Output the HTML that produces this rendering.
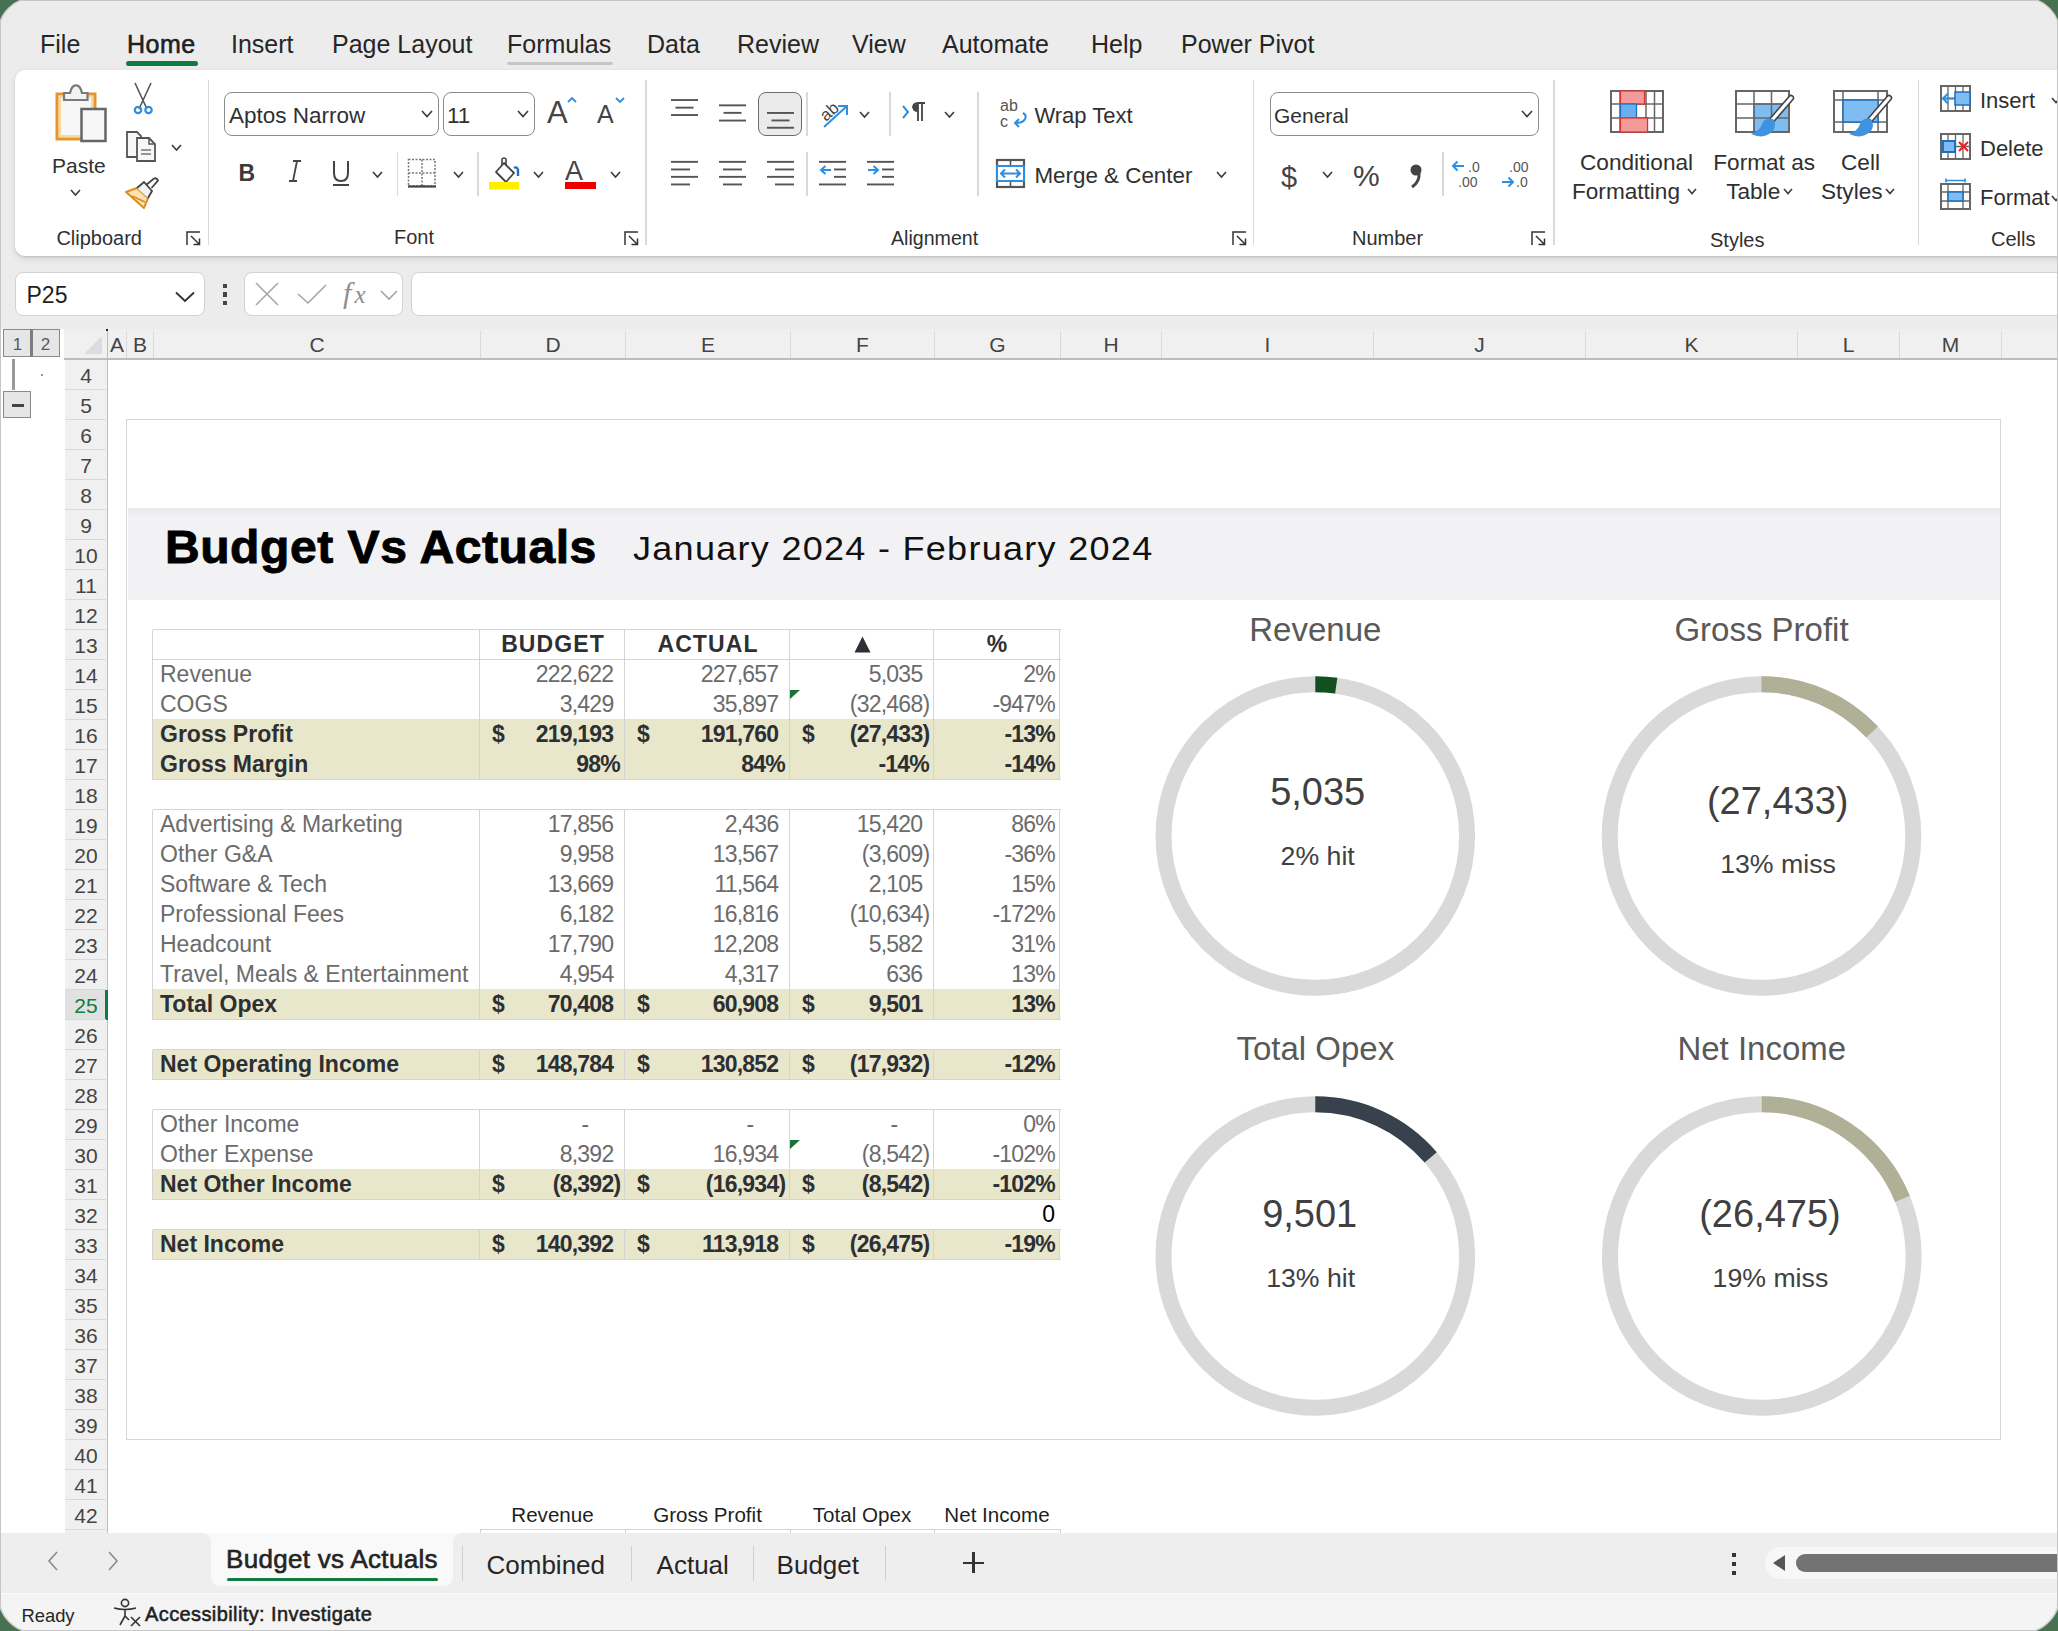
<!DOCTYPE html>
<html><head><meta charset="utf-8">
<style>
*{margin:0;padding:0;box-sizing:border-box}
html,body{width:2058px;height:1631px;overflow:hidden;background:#477150;font-family:"Liberation Sans",sans-serif}
.a{position:absolute;white-space:pre}
#win{position:absolute;left:0;top:0;width:2058px;height:1631px;background:#ececec;overflow:hidden}
#frame{position:absolute;left:0;top:0;width:2058px;height:1631px;border-radius:22px;border:1.5px solid #c4c4c4;pointer-events:none}
.menu{font-size:25px;color:#262626;line-height:30px}
.rib{position:absolute;left:15px;top:70px;width:2100px;height:186px;background:#fff;border-radius:10px;box-shadow:0 1px 2px rgba(0,0,0,.12),0 3px 7px rgba(0,0,0,.10)}
.glab{font-size:20px;color:#262626;line-height:24px}
.sep{position:absolute;width:1.5px;background:#d8d8d8}
.rtxt{font-size:22px;color:#262626;line-height:26px}
.box{position:absolute;background:#fff;border:1.5px solid #8c8c8c;border-radius:8px}
.fbox{position:absolute;background:#fff;border:1px solid #d2d2d2;border-radius:8px}
svg{position:absolute;overflow:visible}
.colh{position:absolute;top:329px;height:30px;font-size:21px;color:#444;text-align:center;line-height:31px}
.cb{position:absolute;top:332px;width:1px;height:26px;background:#d6d6d6}
.rowh{position:absolute;left:65px;width:42px;height:30px;font-size:21px;color:#444;text-align:center;line-height:31px}
.rb{position:absolute;left:66px;width:40px;height:1.5px;background:#d6d6d6}
.t{position:absolute;font-size:23px;color:#6b6b6b;white-space:pre;line-height:30px;height:30px}
.tb{font-weight:bold;color:#2b2b2b}
.r{text-align:right}
.sh{position:absolute;background:#e8e7cc}
.hl{position:absolute;height:1.5px;background:#d4d4d4}
.vl{position:absolute;width:1.5px;background:#d4d4d4}
.dt{position:absolute;font-size:34px;color:#595959;white-space:pre;line-height:40px}
.dv{position:absolute;font-size:37px;color:#404040;white-space:pre;line-height:44px}
.ds{position:absolute;font-size:27px;color:#404040;white-space:pre;line-height:32px}

</style></head><body>
<div id="win">
<div class="a" style="top:29.14px;font-size:25px;line-height:31px;color:#262626;left:40px;">File</div>
<div class="a" style="top:29.14px;font-size:25px;line-height:31px;color:#262626;left:231px;">Insert</div>
<div class="a" style="top:29.14px;font-size:25px;line-height:31px;color:#262626;left:332px;">Page Layout</div>
<div class="a" style="top:29.14px;font-size:25px;line-height:31px;color:#262626;left:507px;">Formulas</div>
<div class="a" style="top:29.14px;font-size:25px;line-height:31px;color:#262626;left:647px;">Data</div>
<div class="a" style="top:29.14px;font-size:25px;line-height:31px;color:#262626;left:737px;">Review</div>
<div class="a" style="top:29.14px;font-size:25px;line-height:31px;color:#262626;left:852px;">View</div>
<div class="a" style="top:29.14px;font-size:25px;line-height:31px;color:#262626;left:942px;">Automate</div>
<div class="a" style="top:29.14px;font-size:25px;line-height:31px;color:#262626;left:1091px;">Help</div>
<div class="a" style="top:29.14px;font-size:25px;line-height:31px;color:#262626;left:1181px;">Power Pivot</div>
<div class="a" style="top:29.14px;font-size:25px;line-height:31px;color:#1f1f1f;letter-spacing:0.5px;left:127px;-webkit-text-stroke:0.6px #1f1f1f;">Home</div>
<div class="a" style="left:126px;top:61px;width:72px;height:5px;background:#107c41;border-radius:3px"></div>
<div class="a" style="left:507px;top:62px;width:106px;height:3px;background:#c6c6c6;border-radius:2px"></div>
<div class="rib"></div>
<div class="a" style="left:207.8px;top:80px;width:1.5px;height:165px;background:#d9d9d9;"></div>
<div class="a" style="left:645px;top:80px;width:1.5px;height:165px;background:#d9d9d9;"></div>
<div class="a" style="left:1252.8px;top:80px;width:1.5px;height:165px;background:#d9d9d9;"></div>
<div class="a" style="left:1553px;top:80px;width:1.5px;height:165px;background:#d9d9d9;"></div>
<div class="a" style="left:1917.5px;top:80px;width:1.5px;height:165px;background:#d9d9d9;"></div>
<svg style="left:50px;top:84px" width="60" height="62" viewBox="0 0 60 62"><rect x="7" y="10" width="38" height="45" fill="#fdf3dc" stroke="#e59430" stroke-width="3"/><rect x="10" y="13" width="32" height="39" fill="#f7f7f7" stroke="#fbd89a" stroke-width="2"/><path d="M14 16 V9 H20 Q22 1 26 1.5 Q30 1 32 9 H37.5 V16 Z" fill="#f3f3f3" stroke="#7a7a7a" stroke-width="2.2"/><rect x="31.5" y="25" width="24" height="32" fill="#f7f7f7" stroke="#666" stroke-width="2.5"/></svg>
<div class="a" style="top:152.82px;font-size:21px;line-height:26px;color:#303030;left:52px;">Paste</div>
<svg style="left:68.5px;top:187.5px" width="13" height="9" viewBox="0 0 13 9"><path d="M2 2 L6.5 7 L11 2" fill="none" stroke="#3a3a3a" stroke-width="1.6"/></svg>
<svg style="left:130px;top:82px" width="28" height="34" viewBox="0 0 28 34"><path d="M5 1 L17 27 M21 1 L9 27" stroke="#555" stroke-width="1.6" fill="none"/><circle cx="8" cy="28" r="3.2" fill="none" stroke="#2f8ee0" stroke-width="2.2"/><circle cx="18.5" cy="28" r="3.2" fill="none" stroke="#2f8ee0" stroke-width="2.2"/></svg>
<svg style="left:124px;top:130px" width="34" height="34" viewBox="0 0 34 34"><path d="M3 2 H13 L17 6 V27 H3 Z" fill="#f7f7f7" stroke="#555" stroke-width="1.8"/><path d="M13 8 H25 L31 14 V31 H13 Z" fill="#f7f7f7" stroke="#555" stroke-width="1.8"/><path d="M25 8 V14 H31" fill="none" stroke="#555" stroke-width="1.5"/><path d="M17 20 H27 M17 24 H27" stroke="#777" stroke-width="1.6"/></svg>
<svg style="left:169.5px;top:142.5px" width="13" height="9" viewBox="0 0 13 9"><path d="M2 2 L6.5 7 L11 2" fill="none" stroke="#3a3a3a" stroke-width="1.6"/></svg>
<svg style="left:122px;top:176px" width="40" height="36" viewBox="0 0 40 36"><path d="M4 16 L15 12 L26 22 L22 32 Z" fill="#fde3b0" stroke="#e08a22" stroke-width="2" stroke-linejoin="round"/><path d="M10 20 L23 26" stroke="#e08a22" stroke-width="1.6"/><path d="M15 12 L22 6 L30 15 L26 22" fill="#f3f3f3" stroke="#444" stroke-width="1.8"/><path d="M24 9 L32 2.5 Q35 1.5 36 4.5 L29.5 12" fill="none" stroke="#444" stroke-width="1.8"/></svg>
<div class="a" style="top:225.87px;font-size:20px;line-height:25px;color:#303030;left:56.4px;">Clipboard</div>
<svg style="left:186px;top:231px" width="16" height="15" viewBox="0 0 16 15"><path d="M1 14 V1 H14" fill="none" stroke="#333" stroke-width="1.5"/><path d="M5 5 L13 13 M7.5 13.5 H13.5 V7.5" fill="none" stroke="#333" stroke-width="1.5"/></svg>
<div class="box" style="left:224px;top:92px;width:215px;height:44px"></div>
<div class="a" style="top:101.60px;font-size:22.5px;line-height:28px;color:#303030;left:229px;">Aptos Narrow</div>
<svg style="left:420.0px;top:109.25px" width="14" height="9.5" viewBox="0 0 14 9.5"><path d="M2 2 L7.0 7.5 L12 2" fill="none" stroke="#3a3a3a" stroke-width="1.6"/></svg>
<div class="box" style="left:443px;top:92px;width:92px;height:44px"></div>
<div class="a" style="top:101.60px;font-size:22.5px;line-height:28px;color:#303030;left:447px;">11</div>
<svg style="left:516.0px;top:109.25px" width="14" height="9.5" viewBox="0 0 14 9.5"><path d="M2 2 L7.0 7.5 L12 2" fill="none" stroke="#3a3a3a" stroke-width="1.6"/></svg>
<div class="a" style="top:93.36px;font-size:31px;line-height:39px;color:#444;left:547px;">A</div>
<svg style="left:566px;top:96px" width="12" height="8" viewBox="0 0 12 8"><path d="M2 6 L6 2 L10 6" fill="none" stroke="#2f8ee0" stroke-width="1.8"/></svg>
<div class="a" style="top:99.44px;font-size:25px;line-height:31px;color:#444;left:597px;">A</div>
<svg style="left:614px;top:96px" width="12" height="8" viewBox="0 0 12 8"><path d="M2 2 L6 6 L10 2" fill="none" stroke="#2f8ee0" stroke-width="1.8"/></svg>
<div class="a" style="top:158.63px;font-size:23px;line-height:29px;color:#3a3a3a;font-weight:bold;left:238.5px;">B</div>
<svg style="left:286px;top:160px" width="18" height="22" viewBox="0 0 18 22"><path d="M7 1 H15 M3 21 H11 M11 1 L7 21" fill="none" stroke="#444" stroke-width="1.8"/></svg>
<svg style="left:331px;top:160px" width="22" height="28" viewBox="0 0 22 28"><path d="M3 1 V13 Q3 21 10 21 Q17 21 17 13 V1" fill="none" stroke="#444" stroke-width="2"/><path d="M2 25 H18" stroke="#444" stroke-width="2"/></svg>
<svg style="left:370.5px;top:169.5px" width="13" height="9" viewBox="0 0 13 9"><path d="M2 2 L6.5 7 L11 2" fill="none" stroke="#3a3a3a" stroke-width="1.6"/></svg>
<div class="a" style="left:396.7px;top:152px;width:1.5px;height:44px;background:#d9d9d9;"></div>
<svg style="left:406px;top:157px" width="32" height="32" viewBox="0 0 32 32"><path d="M2.5 2.5 H29 V29 H2.5 Z M16 2.5 V29 M2.5 16 H29" fill="none" stroke="#777" stroke-width="1.5" stroke-dasharray="2 1.5"/><path d="M2 29.5 H30" stroke="#444" stroke-width="2.2"/></svg>
<svg style="left:451.5px;top:169.5px" width="13" height="9" viewBox="0 0 13 9"><path d="M2 2 L6.5 7 L11 2" fill="none" stroke="#3a3a3a" stroke-width="1.6"/></svg>
<div class="a" style="left:477.3px;top:152px;width:1.5px;height:44px;background:#d9d9d9;"></div>
<svg style="left:487px;top:157px" width="36" height="34" viewBox="0 0 36 34"><path d="M9 15 L17 6 L27 16 L19 25 Z" fill="none" stroke="#444" stroke-width="1.8" stroke-linejoin="round"/><path d="M15 8 V2 Q17 0 19 2 V8" fill="none" stroke="#444" stroke-width="1.6"/><path d="M27 11 Q30 9 31 13 V19" fill="none" stroke="#1e6fc0" stroke-width="2.4"/><rect x="2" y="25" width="30" height="7.5" fill="#ffee00"/></svg>
<svg style="left:531.5px;top:169.5px" width="13" height="9" viewBox="0 0 13 9"><path d="M2 2 L6.5 7 L11 2" fill="none" stroke="#3a3a3a" stroke-width="1.6"/></svg>
<div class="a" style="top:154.24px;font-size:27px;line-height:34px;color:#444;left:565px;">A</div>
<div class="a" style="left:565px;top:181.5px;width:31px;height:7.5px;background:#ee0000;"></div>
<svg style="left:608.5px;top:169.5px" width="13" height="9" viewBox="0 0 13 9"><path d="M2 2 L6.5 7 L11 2" fill="none" stroke="#3a3a3a" stroke-width="1.6"/></svg>
<div class="a" style="top:224.77px;font-size:20px;line-height:25px;color:#303030;left:394px;">Font</div>
<svg style="left:624px;top:231px" width="16" height="15" viewBox="0 0 16 15"><path d="M1 14 V1 H14" fill="none" stroke="#333" stroke-width="1.5"/><path d="M5 5 L13 13 M7.5 13.5 H13.5 V7.5" fill="none" stroke="#333" stroke-width="1.5"/></svg>
<svg style="left:670.5px;top:0px" width="40" height="200" viewBox="0 0 40 200"><rect x="0" y="99.1" width="27" height="1.9" fill="#555"/><rect x="4.5" y="106.69999999999999" width="18" height="1.9" fill="#555"/><rect x="0" y="114.1" width="27" height="1.9" fill="#555"/></svg>
<svg style="left:718.6px;top:0px" width="40" height="200" viewBox="0 0 40 200"><rect x="0" y="104.39999999999999" width="27" height="1.9" fill="#555"/><rect x="4.5" y="111.89999999999999" width="18" height="1.9" fill="#555"/><rect x="0" y="119.6" width="27" height="1.9" fill="#555"/></svg>
<div class="a" style="left:758px;top:92px;width:43.5px;height:44px;background:#ebebeb;border:1.5px solid #6b6b6b;border-radius:8px"></div>
<svg style="left:766.6px;top:0px" width="40" height="200" viewBox="0 0 40 200"><rect x="0" y="112.0" width="27" height="1.9" fill="#555"/><rect x="4.5" y="119.5" width="18" height="1.9" fill="#555"/><rect x="0" y="126.8" width="27" height="1.9" fill="#555"/></svg>
<div class="a" style="left:806.3px;top:92px;width:1.5px;height:44px;background:#d9d9d9;"></div>
<svg style="left:814px;top:96px" width="40" height="34" viewBox="0 0 40 34"><text x="0" y="0" transform="translate(12 26) rotate(-42)" font-family="Liberation Sans" font-size="17" fill="#444">ab</text><path d="M10 31 L33 10 M24 10 H33 V19" fill="none" stroke="#2f8ee0" stroke-width="2"/></svg>
<svg style="left:857.9px;top:109.5px" width="13" height="9" viewBox="0 0 13 9"><path d="M2 2 L6.5 7 L11 2" fill="none" stroke="#3a3a3a" stroke-width="1.6"/></svg>
<div class="a" style="left:889px;top:92px;width:1.5px;height:44px;background:#d9d9d9;"></div>
<svg style="left:900px;top:102px" width="30" height="22" viewBox="0 0 30 22"><path d="M3 4 L8 10 L3 16" fill="none" stroke="#2f8ee0" stroke-width="2"/><path d="M13 6 Q13 1 18 1 H25 M18 1 V19 M22 1 V19" fill="none" stroke="#444" stroke-width="1.8"/><path d="M18 2 Q12 2 12.5 6 Q13 10 18 10 Z" fill="#444"/></svg>
<svg style="left:943.4px;top:109.5px" width="13" height="9" viewBox="0 0 13 9"><path d="M2 2 L6.5 7 L11 2" fill="none" stroke="#3a3a3a" stroke-width="1.6"/></svg>
<div class="a" style="left:977px;top:92px;width:1.5px;height:104px;background:#d9d9d9;"></div>
<svg style="left:670.5px;top:0px" width="40" height="200" viewBox="0 0 40 200"><rect x="0" y="160.9" width="27" height="1.9" fill="#555"/><rect x="0" y="168.5" width="19" height="1.9" fill="#555"/><rect x="0" y="175.9" width="27" height="1.9" fill="#555"/><rect x="0" y="183.5" width="19" height="1.9" fill="#555"/></svg>
<svg style="left:718.6px;top:0px" width="40" height="200" viewBox="0 0 40 200"><rect x="0" y="160.9" width="27" height="1.9" fill="#555"/><rect x="4" y="168.5" width="19" height="1.9" fill="#555"/><rect x="0" y="175.9" width="27" height="1.9" fill="#555"/><rect x="4" y="183.5" width="19" height="1.9" fill="#555"/></svg>
<svg style="left:766.6px;top:0px" width="40" height="200" viewBox="0 0 40 200"><rect x="0" y="160.9" width="27" height="1.9" fill="#555"/><rect x="8" y="168.5" width="19" height="1.9" fill="#555"/><rect x="0" y="175.9" width="27" height="1.9" fill="#555"/><rect x="8" y="183.5" width="19" height="1.9" fill="#555"/></svg>
<div class="a" style="left:806.3px;top:152px;width:1.5px;height:44px;background:#d9d9d9;"></div>
<svg style="left:819px;top:0px" width="40" height="200" viewBox="0 0 40 200"><rect x="0" y="160.9" width="27" height="1.9" fill="#555"/><rect x="15" y="168.5" width="12" height="1.9" fill="#555"/><rect x="15" y="175.9" width="12" height="1.9" fill="#555"/><rect x="0" y="183.5" width="27" height="1.9" fill="#555"/></svg>
<svg style="left:819px;top:164px" width="14" height="12" viewBox="0 0 14 12"><path d="M12 6 H2 M6.5 2 L2 6 L6.5 10" fill="none" stroke="#2f8ee0" stroke-width="2"/></svg>
<svg style="left:867.3px;top:0px" width="40" height="200" viewBox="0 0 40 200"><rect x="0" y="160.9" width="27" height="1.9" fill="#555"/><rect x="15" y="168.5" width="12" height="1.9" fill="#555"/><rect x="15" y="175.9" width="12" height="1.9" fill="#555"/><rect x="0" y="183.5" width="27" height="1.9" fill="#555"/></svg>
<svg style="left:867px;top:164px" width="14" height="12" viewBox="0 0 14 12"><path d="M1 6 H11 M6.5 2 L11 6 L6.5 10" fill="none" stroke="#2f8ee0" stroke-width="2"/></svg>
<svg style="left:998px;top:97px" width="32" height="34" viewBox="0 0 32 34"><text x="2" y="14" font-family="Liberation Sans" font-size="16" fill="#555">ab</text><text x="2" y="30" font-family="Liberation Sans" font-size="16" fill="#555">c</text><path d="M25 16 Q29 18 27 22 Q25 26 18 26 M21 22 L17 26 L21 30" fill="none" stroke="#2f8ee0" stroke-width="2"/></svg>
<div class="a" style="top:101.78px;font-size:22px;line-height:28px;color:#303030;left:1034.4px;">Wrap Text</div>
<svg style="left:995px;top:158px" width="32" height="31" viewBox="0 0 32 31"><rect x="2" y="2" width="27" height="27" fill="none" stroke="#555" stroke-width="2.2"/><path d="M15.5 2 V8 M15.5 23 V29" stroke="#555" stroke-width="1.6"/><rect x="2" y="8" width="27" height="15" fill="#fff" stroke="#2f8ee0" stroke-width="2"/><path d="M6 15.5 H25 M10 11.5 L6 15.5 L10 19.5 M21 11.5 L25 15.5 L21 19.5" fill="none" stroke="#2f8ee0" stroke-width="2"/></svg>
<div class="a" style="top:161.54px;font-size:22.4px;line-height:28px;color:#303030;left:1034.4px;">Merge &amp; Center</div>
<svg style="left:1215.0px;top:170.3px" width="13" height="9" viewBox="0 0 13 9"><path d="M2 2 L6.5 7 L11 2" fill="none" stroke="#3a3a3a" stroke-width="1.6"/></svg>
<div class="a" style="top:225.81px;font-size:19.6px;line-height:24px;color:#303030;left:891px;">Alignment</div>
<svg style="left:1232px;top:231px" width="16" height="15" viewBox="0 0 16 15"><path d="M1 14 V1 H14" fill="none" stroke="#333" stroke-width="1.5"/><path d="M5 5 L13 13 M7.5 13.5 H13.5 V7.5" fill="none" stroke="#333" stroke-width="1.5"/></svg>
<div class="box" style="left:1270px;top:92px;width:269px;height:44px"></div>
<div class="a" style="top:103.12px;font-size:21px;line-height:26px;color:#303030;left:1274px;">General</div>
<svg style="left:1520.0px;top:109.25px" width="14" height="9.5" viewBox="0 0 14 9.5"><path d="M2 2 L7.0 7.5 L12 2" fill="none" stroke="#3a3a3a" stroke-width="1.6"/></svg>
<div class="a" style="top:158.55px;font-size:29px;line-height:36px;color:#444;left:1281px;">$</div>
<svg style="left:1320.5px;top:169.5px" width="13" height="9" viewBox="0 0 13 9"><path d="M2 2 L6.5 7 L11 2" fill="none" stroke="#3a3a3a" stroke-width="1.6"/></svg>
<div class="a" style="top:157.20px;font-size:30px;line-height:38px;color:#444;left:1353px;">%</div>
<div class="a" style="top:184.57px;font-size:0.1px;line-height:0px;color:#303030;left:1407px;">&#x275E;</div>
<svg style="left:1406px;top:160px" width="20" height="30" viewBox="0 0 20 30"><circle cx="10" cy="10" r="5.5" fill="#444"/><path d="M13 12 Q14 22 6 27" fill="none" stroke="#444" stroke-width="3"/></svg>
<div class="a" style="left:1442.4px;top:152px;width:1.5px;height:43.5px;background:#d9d9d9;"></div>
<svg style="left:1450px;top:158px" width="36" height="32" viewBox="0 0 36 32"><path d="M14 8 H3 M7.5 3.5 L3 8 L7.5 12.5" fill="none" stroke="#2f8ee0" stroke-width="2"/><text x="18" y="14" font-family="Liberation Sans" font-size="14" fill="#555">.0</text><text x="8" y="29" font-family="Liberation Sans" font-size="14" fill="#555">.00</text></svg>
<svg style="left:1499px;top:158px" width="36" height="32" viewBox="0 0 36 32"><text x="10" y="14" font-family="Liberation Sans" font-size="14" fill="#555">.00</text><path d="M3 24 H14 M9.5 19.5 L14 24 L9.5 28.5" fill="none" stroke="#2f8ee0" stroke-width="2"/><text x="17" y="29" font-family="Liberation Sans" font-size="14" fill="#555">.0</text></svg>
<div class="a" style="top:225.67px;font-size:20px;line-height:25px;color:#303030;left:1352px;">Number</div>
<svg style="left:1531px;top:231px" width="16" height="15" viewBox="0 0 16 15"><path d="M1 14 V1 H14" fill="none" stroke="#333" stroke-width="1.5"/><path d="M5 5 L13 13 M7.5 13.5 H13.5 V7.5" fill="none" stroke="#333" stroke-width="1.5"/></svg>
<svg style="left:1610px;top:90px" width="56" height="44" viewBox="0 0 56 44"><rect x="10.5" y="1" width="24" height="13" fill="#f59a9a" stroke="#e03030" stroke-width="1.2"/><rect x="10.5" y="14" width="16" height="14" fill="#6ab0ee" stroke="#1e6fc0" stroke-width="1.2"/><rect x="10.5" y="28" width="27" height="14" fill="#f59a9a" stroke="#e03030" stroke-width="1.2"/><rect x="1" y="1" width="52" height="41" fill="none" stroke="#666" stroke-width="2"/><path d="M10 1 V42 M36 1 V42 M44.5 1 V42 M1 14 H53 M1 28 H53" stroke="#666" stroke-width="1.5"/><rect x="10.5" y="1" width="24" height="13" fill="#f59a9a" stroke="#e03030" stroke-width="1.2"/><rect x="10.5" y="14" width="16" height="14" fill="#6ab0ee" stroke="#1e6fc0" stroke-width="1.2"/><rect x="10.5" y="28" width="27" height="14" fill="#f59a9a" stroke="#e03030" stroke-width="1.2"/></svg>
<div class="a" style="top:148.77px;font-size:22.6px;line-height:28px;color:#303030;left:1580px;">Conditional</div>
<div class="a" style="top:178.17px;font-size:22.6px;line-height:28px;color:#303030;left:1572px;">Formatting</div>
<svg style="left:1686.0px;top:186.75px" width="12" height="8.5" viewBox="0 0 12 8.5"><path d="M2 2 L6.0 6.5 L10 2" fill="none" stroke="#3a3a3a" stroke-width="1.6"/></svg>
<svg style="left:1735px;top:90px" width="60" height="52" viewBox="0 0 60 52"><rect x="19" y="14" width="35" height="28" fill="#7fbdf0" stroke="#1e6fc0" stroke-width="1.2"/><rect x="1" y="1" width="53" height="41" fill="none" stroke="#666" stroke-width="2"/><path d="M19 1 V42 M36.5 1 V42 M1 14 H54 M1 28 H54" stroke="#666" stroke-width="1.5"/><path d="M56 8 L37 30" stroke="#444" stroke-width="6.5" stroke-linecap="round"/><path d="M56 8 L37 30" stroke="#fff" stroke-width="3.3" stroke-linecap="round"/><path d="M38 29 Q30 27 27 34 Q25 41 16 44 Q29 50 38 41 Q42 35 38 29 Z" fill="#3d93e0"/></svg>
<div class="a" style="top:148.77px;font-size:22.6px;line-height:28px;color:#303030;left:1713.3px;">Format as</div>
<div class="a" style="top:178.17px;font-size:22.6px;line-height:28px;color:#303030;left:1726.2px;">Table</div>
<svg style="left:1782.0px;top:186.75px" width="12" height="8.5" viewBox="0 0 12 8.5"><path d="M2 2 L6.0 6.5 L10 2" fill="none" stroke="#3a3a3a" stroke-width="1.6"/></svg>
<svg style="left:1833px;top:90px" width="60" height="52" viewBox="0 0 60 52"><rect x="1" y="1" width="53" height="41" fill="none" stroke="#666" stroke-width="2"/><path d="M10 1 V42 M45 1 V42 M1 10 H54 M1 32 H54" stroke="#666" stroke-width="1.5"/><rect x="10" y="10" width="35" height="22" fill="#7fbdf0" stroke="#1e6fc0" stroke-width="1.5"/><path d="M56 8 L37 30" stroke="#444" stroke-width="6.5" stroke-linecap="round"/><path d="M56 8 L37 30" stroke="#fff" stroke-width="3.3" stroke-linecap="round"/><path d="M38 29 Q30 27 27 34 Q25 41 16 44 Q29 50 38 41 Q42 35 38 29 Z" fill="#3d93e0"/></svg>
<div class="a" style="top:148.77px;font-size:22.6px;line-height:28px;color:#303030;left:1841px;">Cell</div>
<div class="a" style="top:178.17px;font-size:22.6px;line-height:28px;color:#303030;left:1821px;">Styles</div>
<svg style="left:1884.0px;top:186.75px" width="12" height="8.5" viewBox="0 0 12 8.5"><path d="M2 2 L6.0 6.5 L10 2" fill="none" stroke="#3a3a3a" stroke-width="1.6"/></svg>
<div class="a" style="top:227.67px;font-size:20px;line-height:25px;color:#303030;left:1710px;">Styles</div>
<svg style="left:1940px;top:85px" width="32" height="28" viewBox="0 0 32 28"><rect x="1" y="1" width="29" height="25" fill="none" stroke="#666" stroke-width="2"/><path d="M8 1 V26 M15.5 1 V26 M23 1 V26 M1 13.5 H30" stroke="#666" stroke-width="1.3"/><rect x="15" y="7" width="15" height="13" fill="#7fbdf0" stroke="#1e6fc0" stroke-width="1.5"/><path d="M14 13.5 H3 M8 8.5 L3 13.5 L8 18.5" fill="none" stroke="#2f8ee0" stroke-width="2"/></svg>
<div class="a" style="top:86.98px;font-size:22px;line-height:28px;color:#303030;left:1980px;">Insert</div>
<svg style="left:1940px;top:133px" width="32" height="28" viewBox="0 0 32 28"><rect x="1" y="1" width="29" height="25" fill="none" stroke="#666" stroke-width="2"/><path d="M8 1 V26 M15.5 1 V26 M23 1 V26 M1 13.5 H30" stroke="#666" stroke-width="1.3"/><rect x="3" y="8" width="12" height="11" fill="#7fbdf0" stroke="#1e6fc0" stroke-width="2"/><path d="M19 9 L28 18 M28 9 L19 18" stroke="#e02020" stroke-width="2"/></svg>
<div class="a" style="top:135.18px;font-size:22px;line-height:28px;color:#303030;left:1980px;">Delete</div>
<svg style="left:1940px;top:178px" width="32" height="32" viewBox="0 0 32 32"><rect x="1" y="6" width="29" height="25" fill="none" stroke="#666" stroke-width="2"/><path d="M8 6 V31 M23 6 V31 M1 14 H30 M1 23 H30" stroke="#666" stroke-width="1.3"/><rect x="8" y="14" width="15" height="9" fill="#7fbdf0" stroke="#1e6fc0" stroke-width="1.5"/><path d="M6 2.5 H25 M6 0.5 V4.5 M25 0.5 V4.5" stroke="#2f8ee0" stroke-width="1.6"/></svg>
<div class="a" style="top:184.28px;font-size:22px;line-height:28px;color:#303030;left:1980px;">Format</div>
<svg style="left:2050.0px;top:95.75px" width="12" height="8.5" viewBox="0 0 12 8.5"><path d="M2 2 L6.0 6.5 L10 2" fill="none" stroke="#3a3a3a" stroke-width="1.6"/></svg>
<svg style="left:2050.0px;top:193.75px" width="12" height="8.5" viewBox="0 0 12 8.5"><path d="M2 2 L6.0 6.5 L10 2" fill="none" stroke="#3a3a3a" stroke-width="1.6"/></svg>
<div class="a" style="top:227.17px;font-size:20px;line-height:25px;color:#303030;left:1991px;">Cells</div>
<div class="fbox" style="left:15px;top:272px;width:190px;height:44px"></div>
<div class="a" style="top:280.93px;font-size:23px;line-height:29px;color:#1f1f1f;left:26.5px;">P25</div>
<svg style="left:173.5px;top:290px" width="22" height="14" viewBox="0 0 22 14"><path d="M2 2.5 L11 11 L20 2.5" fill="none" stroke="#333" stroke-width="1.9"/></svg>
<div class="a" style="left:222.5px;top:283.5px;width:4px;height:4.5px;background:#444;"></div>
<div class="a" style="left:222.5px;top:292px;width:4px;height:4.5px;background:#444;"></div>
<div class="a" style="left:222.5px;top:300.5px;width:4px;height:4.5px;background:#444;"></div>
<div class="fbox" style="left:244px;top:272px;width:159px;height:44px"></div>
<svg style="left:254px;top:281px" width="26" height="26" viewBox="0 0 26 26"><path d="M2 2 L24 24 M24 2 L2 24" stroke="#a6a6a6" stroke-width="1.6"/></svg>
<svg style="left:296px;top:282px" width="34" height="24" viewBox="0 0 34 24"><path d="M2 12 L12 21 L30 3" fill="none" stroke="#a6a6a6" stroke-width="1.6"/></svg>
<div class="a" style="top:274.21px;font-size:30px;line-height:38px;color:#8f8f8f;left:343px;font-family:'Liberation Serif';"><i>f</i></div>
<div class="a" style="top:279.44px;font-size:25px;line-height:31px;color:#8f8f8f;left:354.5px;font-family:'Liberation Serif';"><i>x</i></div>
<svg style="left:379px;top:289px" width="22" height="12" viewBox="0 0 22 12"><path d="M2 2 L10 10 L18 2" fill="none" stroke="#a6a6a6" stroke-width="1.6"/></svg>
<div class="fbox" style="left:411px;top:272px;width:1700px;height:44px"></div>
<div class="a" style="left:0px;top:329px;width:2058px;height:1204px;background:#fff;"></div>
<div class="a" style="left:3px;top:328.5px;width:28.5px;height:28.5px;background:#e6e6e6;border:1.5px solid #8a8a8a"></div>
<div class="a" style="left:31px;top:328.5px;width:29px;height:28.5px;background:#e6e6e6;border:1.5px solid #8a8a8a"></div>
<div class="a" style="left:30.2px;top:329px;width:2.4px;height:28px;background:#7d7d7d;"></div>
<div class="a" style="top:334.21px;font-size:17px;line-height:21px;color:#5a5a5a;left:-582.5px;width:1200px;text-align:center;">1</div>
<div class="a" style="top:334.21px;font-size:17px;line-height:21px;color:#5a5a5a;left:-554.5px;width:1200px;text-align:center;">2</div>
<div class="a" style="left:12.2px;top:358.5px;width:2.5px;height:31px;background:#9a9a9a;"></div>
<div class="a" style="left:3px;top:390.5px;width:28px;height:27.5px;background:#e6e6e6;border:1.5px solid #8a8a8a"></div>
<div class="a" style="left:12px;top:404px;width:12px;height:2.5px;background:#444;"></div>
<div class="a" style="left:41px;top:374px;width:2px;height:2px;background:#9a9a9a;"></div>
<div class="a" style="left:64px;top:329px;width:1994px;height:30px;background:#f0f0f0;"></div>
<svg style="left:82px;top:334px" width="22" height="22" viewBox="0 0 22 22"><path d="M20 2 V20 H2 Z" fill="#dcdcdc"/></svg>
<div class="a" style="left:64px;top:358.3px;width:1994px;height:1.6px;background:#bdbdbd;"></div>
<div class="a" style="left:106.5px;top:329px;width:1.6px;height:1204px;background:#bdbdbd;"></div>
<div class="a" style="left:106px;top:329px;width:2px;height:2px;background:#222;"></div>
<div class="a" style="top:331.82px;font-size:21px;line-height:26px;color:#444;left:-483.0px;width:1200px;text-align:center;">A</div>
<div class="a" style="left:125.5px;top:331px;width:1.2px;height:27px;background:#d9d9d9;"></div>
<div class="a" style="top:331.82px;font-size:21px;line-height:26px;color:#444;left:-460.0px;width:1200px;text-align:center;">B</div>
<div class="a" style="left:152.5px;top:331px;width:1.2px;height:27px;background:#d9d9d9;"></div>
<div class="a" style="top:331.82px;font-size:21px;line-height:26px;color:#444;left:-283.0px;width:1200px;text-align:center;">C</div>
<div class="a" style="left:479.5px;top:331px;width:1.2px;height:27px;background:#d9d9d9;"></div>
<div class="a" style="top:331.82px;font-size:21px;line-height:26px;color:#444;left:-47.0px;width:1200px;text-align:center;">D</div>
<div class="a" style="left:624.5px;top:331px;width:1.2px;height:27px;background:#d9d9d9;"></div>
<div class="a" style="top:331.82px;font-size:21px;line-height:26px;color:#444;left:108.0px;width:1200px;text-align:center;">E</div>
<div class="a" style="left:789.5px;top:331px;width:1.2px;height:27px;background:#d9d9d9;"></div>
<div class="a" style="top:331.82px;font-size:21px;line-height:26px;color:#444;left:262.5px;width:1200px;text-align:center;">F</div>
<div class="a" style="left:933.5px;top:331px;width:1.2px;height:27px;background:#d9d9d9;"></div>
<div class="a" style="top:331.82px;font-size:21px;line-height:26px;color:#444;left:397.5px;width:1200px;text-align:center;">G</div>
<div class="a" style="left:1059.5px;top:331px;width:1.2px;height:27px;background:#d9d9d9;"></div>
<div class="a" style="top:331.82px;font-size:21px;line-height:26px;color:#444;left:511.0px;width:1200px;text-align:center;">H</div>
<div class="a" style="left:1160.5px;top:331px;width:1.2px;height:27px;background:#d9d9d9;"></div>
<div class="a" style="top:331.82px;font-size:21px;line-height:26px;color:#444;left:667.5px;width:1200px;text-align:center;">I</div>
<div class="a" style="left:1372.5px;top:331px;width:1.2px;height:27px;background:#d9d9d9;"></div>
<div class="a" style="top:331.82px;font-size:21px;line-height:26px;color:#444;left:879.5px;width:1200px;text-align:center;">J</div>
<div class="a" style="left:1584.5px;top:331px;width:1.2px;height:27px;background:#d9d9d9;"></div>
<div class="a" style="top:331.82px;font-size:21px;line-height:26px;color:#444;left:1091.5px;width:1200px;text-align:center;">K</div>
<div class="a" style="left:1796.5px;top:331px;width:1.2px;height:27px;background:#d9d9d9;"></div>
<div class="a" style="top:331.82px;font-size:21px;line-height:26px;color:#444;left:1248.5px;width:1200px;text-align:center;">L</div>
<div class="a" style="left:1898.5px;top:331px;width:1.2px;height:27px;background:#d9d9d9;"></div>
<div class="a" style="top:331.82px;font-size:21px;line-height:26px;color:#444;left:1350.5px;width:1200px;text-align:center;">M</div>
<div class="a" style="left:2000.5px;top:331px;width:1.2px;height:27px;background:#d9d9d9;"></div>
<div class="a" style="left:65px;top:359.5px;width:41.5px;height:1174px;background:#f0f0f0;"></div>
<div class="a" style="top:362.82px;font-size:21px;line-height:26px;color:#444;left:-514px;width:1200px;text-align:center;">4</div>
<div class="a" style="left:65px;top:388.5px;width:41px;height:1.3px;background:#d9d9d9;"></div>
<div class="a" style="top:392.82px;font-size:21px;line-height:26px;color:#444;left:-514px;width:1200px;text-align:center;">5</div>
<div class="a" style="left:65px;top:418.5px;width:41px;height:1.3px;background:#d9d9d9;"></div>
<div class="a" style="top:422.82px;font-size:21px;line-height:26px;color:#444;left:-514px;width:1200px;text-align:center;">6</div>
<div class="a" style="left:65px;top:448.5px;width:41px;height:1.3px;background:#d9d9d9;"></div>
<div class="a" style="top:452.82px;font-size:21px;line-height:26px;color:#444;left:-514px;width:1200px;text-align:center;">7</div>
<div class="a" style="left:65px;top:478.5px;width:41px;height:1.3px;background:#d9d9d9;"></div>
<div class="a" style="top:482.82px;font-size:21px;line-height:26px;color:#444;left:-514px;width:1200px;text-align:center;">8</div>
<div class="a" style="left:65px;top:508.5px;width:41px;height:1.3px;background:#d9d9d9;"></div>
<div class="a" style="top:512.82px;font-size:21px;line-height:26px;color:#444;left:-514px;width:1200px;text-align:center;">9</div>
<div class="a" style="left:65px;top:538.5px;width:41px;height:1.3px;background:#d9d9d9;"></div>
<div class="a" style="top:542.82px;font-size:21px;line-height:26px;color:#444;left:-514px;width:1200px;text-align:center;">10</div>
<div class="a" style="left:65px;top:568.5px;width:41px;height:1.3px;background:#d9d9d9;"></div>
<div class="a" style="top:572.82px;font-size:21px;line-height:26px;color:#444;left:-514px;width:1200px;text-align:center;">11</div>
<div class="a" style="left:65px;top:598.5px;width:41px;height:1.3px;background:#d9d9d9;"></div>
<div class="a" style="top:602.82px;font-size:21px;line-height:26px;color:#444;left:-514px;width:1200px;text-align:center;">12</div>
<div class="a" style="left:65px;top:628.5px;width:41px;height:1.3px;background:#d9d9d9;"></div>
<div class="a" style="top:632.82px;font-size:21px;line-height:26px;color:#444;left:-514px;width:1200px;text-align:center;">13</div>
<div class="a" style="left:65px;top:658.5px;width:41px;height:1.3px;background:#d9d9d9;"></div>
<div class="a" style="top:662.82px;font-size:21px;line-height:26px;color:#444;left:-514px;width:1200px;text-align:center;">14</div>
<div class="a" style="left:65px;top:688.5px;width:41px;height:1.3px;background:#d9d9d9;"></div>
<div class="a" style="top:692.82px;font-size:21px;line-height:26px;color:#444;left:-514px;width:1200px;text-align:center;">15</div>
<div class="a" style="left:65px;top:718.5px;width:41px;height:1.3px;background:#d9d9d9;"></div>
<div class="a" style="top:722.82px;font-size:21px;line-height:26px;color:#444;left:-514px;width:1200px;text-align:center;">16</div>
<div class="a" style="left:65px;top:748.5px;width:41px;height:1.3px;background:#d9d9d9;"></div>
<div class="a" style="top:752.82px;font-size:21px;line-height:26px;color:#444;left:-514px;width:1200px;text-align:center;">17</div>
<div class="a" style="left:65px;top:778.5px;width:41px;height:1.3px;background:#d9d9d9;"></div>
<div class="a" style="top:782.82px;font-size:21px;line-height:26px;color:#444;left:-514px;width:1200px;text-align:center;">18</div>
<div class="a" style="left:65px;top:808.5px;width:41px;height:1.3px;background:#d9d9d9;"></div>
<div class="a" style="top:812.82px;font-size:21px;line-height:26px;color:#444;left:-514px;width:1200px;text-align:center;">19</div>
<div class="a" style="left:65px;top:838.5px;width:41px;height:1.3px;background:#d9d9d9;"></div>
<div class="a" style="top:842.82px;font-size:21px;line-height:26px;color:#444;left:-514px;width:1200px;text-align:center;">20</div>
<div class="a" style="left:65px;top:868.5px;width:41px;height:1.3px;background:#d9d9d9;"></div>
<div class="a" style="top:872.82px;font-size:21px;line-height:26px;color:#444;left:-514px;width:1200px;text-align:center;">21</div>
<div class="a" style="left:65px;top:898.5px;width:41px;height:1.3px;background:#d9d9d9;"></div>
<div class="a" style="top:902.82px;font-size:21px;line-height:26px;color:#444;left:-514px;width:1200px;text-align:center;">22</div>
<div class="a" style="left:65px;top:928.5px;width:41px;height:1.3px;background:#d9d9d9;"></div>
<div class="a" style="top:932.82px;font-size:21px;line-height:26px;color:#444;left:-514px;width:1200px;text-align:center;">23</div>
<div class="a" style="left:65px;top:958.5px;width:41px;height:1.3px;background:#d9d9d9;"></div>
<div class="a" style="top:962.82px;font-size:21px;line-height:26px;color:#444;left:-514px;width:1200px;text-align:center;">24</div>
<div class="a" style="left:65px;top:988.5px;width:41px;height:1.3px;background:#d9d9d9;"></div>
<div class="a" style="left:65px;top:989.5px;width:41.5px;height:30px;background:#e1e1e1;"></div>
<div class="a" style="left:104.5px;top:989.5px;width:3.5px;height:30px;background:#107c41;"></div>
<div class="a" style="top:992.82px;font-size:21px;line-height:26px;color:#107c41;left:-514px;width:1200px;text-align:center;">25</div>
<div class="a" style="left:65px;top:1018.5px;width:41px;height:1.3px;background:#d9d9d9;"></div>
<div class="a" style="top:1022.82px;font-size:21px;line-height:26px;color:#444;left:-514px;width:1200px;text-align:center;">26</div>
<div class="a" style="left:65px;top:1048.5px;width:41px;height:1.3px;background:#d9d9d9;"></div>
<div class="a" style="top:1052.82px;font-size:21px;line-height:26px;color:#444;left:-514px;width:1200px;text-align:center;">27</div>
<div class="a" style="left:65px;top:1078.5px;width:41px;height:1.3px;background:#d9d9d9;"></div>
<div class="a" style="top:1082.82px;font-size:21px;line-height:26px;color:#444;left:-514px;width:1200px;text-align:center;">28</div>
<div class="a" style="left:65px;top:1108.5px;width:41px;height:1.3px;background:#d9d9d9;"></div>
<div class="a" style="top:1112.82px;font-size:21px;line-height:26px;color:#444;left:-514px;width:1200px;text-align:center;">29</div>
<div class="a" style="left:65px;top:1138.5px;width:41px;height:1.3px;background:#d9d9d9;"></div>
<div class="a" style="top:1142.82px;font-size:21px;line-height:26px;color:#444;left:-514px;width:1200px;text-align:center;">30</div>
<div class="a" style="left:65px;top:1168.5px;width:41px;height:1.3px;background:#d9d9d9;"></div>
<div class="a" style="top:1172.82px;font-size:21px;line-height:26px;color:#444;left:-514px;width:1200px;text-align:center;">31</div>
<div class="a" style="left:65px;top:1198.5px;width:41px;height:1.3px;background:#d9d9d9;"></div>
<div class="a" style="top:1202.82px;font-size:21px;line-height:26px;color:#444;left:-514px;width:1200px;text-align:center;">32</div>
<div class="a" style="left:65px;top:1228.5px;width:41px;height:1.3px;background:#d9d9d9;"></div>
<div class="a" style="top:1232.82px;font-size:21px;line-height:26px;color:#444;left:-514px;width:1200px;text-align:center;">33</div>
<div class="a" style="left:65px;top:1258.5px;width:41px;height:1.3px;background:#d9d9d9;"></div>
<div class="a" style="top:1262.82px;font-size:21px;line-height:26px;color:#444;left:-514px;width:1200px;text-align:center;">34</div>
<div class="a" style="left:65px;top:1288.5px;width:41px;height:1.3px;background:#d9d9d9;"></div>
<div class="a" style="top:1292.82px;font-size:21px;line-height:26px;color:#444;left:-514px;width:1200px;text-align:center;">35</div>
<div class="a" style="left:65px;top:1318.5px;width:41px;height:1.3px;background:#d9d9d9;"></div>
<div class="a" style="top:1322.82px;font-size:21px;line-height:26px;color:#444;left:-514px;width:1200px;text-align:center;">36</div>
<div class="a" style="left:65px;top:1348.5px;width:41px;height:1.3px;background:#d9d9d9;"></div>
<div class="a" style="top:1352.82px;font-size:21px;line-height:26px;color:#444;left:-514px;width:1200px;text-align:center;">37</div>
<div class="a" style="left:65px;top:1378.5px;width:41px;height:1.3px;background:#d9d9d9;"></div>
<div class="a" style="top:1382.82px;font-size:21px;line-height:26px;color:#444;left:-514px;width:1200px;text-align:center;">38</div>
<div class="a" style="left:65px;top:1408.5px;width:41px;height:1.3px;background:#d9d9d9;"></div>
<div class="a" style="top:1412.82px;font-size:21px;line-height:26px;color:#444;left:-514px;width:1200px;text-align:center;">39</div>
<div class="a" style="left:65px;top:1438.5px;width:41px;height:1.3px;background:#d9d9d9;"></div>
<div class="a" style="top:1442.82px;font-size:21px;line-height:26px;color:#444;left:-514px;width:1200px;text-align:center;">40</div>
<div class="a" style="left:65px;top:1468.5px;width:41px;height:1.3px;background:#d9d9d9;"></div>
<div class="a" style="top:1472.82px;font-size:21px;line-height:26px;color:#444;left:-514px;width:1200px;text-align:center;">41</div>
<div class="a" style="left:65px;top:1498.5px;width:41px;height:1.3px;background:#d9d9d9;"></div>
<div class="a" style="top:1502.82px;font-size:21px;line-height:26px;color:#444;left:-514px;width:1200px;text-align:center;">42</div>
<div class="a" style="left:65px;top:1528.5px;width:41px;height:1.3px;background:#d9d9d9;"></div>
<div class="a" style="left:126px;top:419px;width:1875.2px;height:1020.5px;border:1.5px solid #d6d6d6"></div>
<div class="a" style="left:127.5px;top:507.5px;width:1872px;height:92px;background:#f2f2f4;"></div>
<div class="a" style="left:127.5px;top:507.5px;width:1872px;height:8px;background:linear-gradient(#e9e9eb,#f0f0f2);"></div>
<div class="a" style="top:517.86px;font-size:46px;line-height:58px;color:#000;font-weight:bold;letter-spacing:0.5px;left:165px;transform:scaleX(1.045);transform-origin:0 0;-webkit-text-stroke:0.9px #000;">Budget Vs Actuals</div>
<div class="a" style="top:527.12px;font-size:34px;line-height:42px;color:#111;letter-spacing:1.2px;left:633px;transform:scaleX(1.06);transform-origin:0 0;">January 2024 - February 2024</div>
<div class="a" style="left:153px;top:629.0px;width:908px;height:1.3px;background:#d4d4d4;"></div>
<div class="a" style="left:153px;top:659.0px;width:908px;height:1.3px;background:#d4d4d4;"></div>
<div class="a" style="left:152px;top:629.5px;width:1.2px;height:30.0px;background:#d4d4d4;"></div>
<div class="a" style="left:479px;top:629.5px;width:1.2px;height:30.0px;background:#d4d4d4;"></div>
<div class="a" style="left:624px;top:629.5px;width:1.2px;height:30.0px;background:#d4d4d4;"></div>
<div class="a" style="left:789px;top:629.5px;width:1.2px;height:30.0px;background:#d4d4d4;"></div>
<div class="a" style="left:933px;top:629.5px;width:1.2px;height:30.0px;background:#d4d4d4;"></div>
<div class="a" style="left:1059px;top:629.5px;width:1.2px;height:30.0px;background:#d4d4d4;"></div>
<div class="a" style="top:630.13px;font-size:23px;line-height:29px;color:#2d2f33;font-weight:bold;letter-spacing:1.1px;left:-47.0px;width:1200px;text-align:center;">BUDGET</div>
<div class="a" style="top:630.13px;font-size:23px;line-height:29px;color:#2d2f33;font-weight:bold;letter-spacing:1.1px;left:108.0px;width:1200px;text-align:center;">ACTUAL</div>
<svg style="left:853.5px;top:636.0px" width="18" height="17" viewBox="0 0 18 17"><path d="M8.5 0.5 L16.5 16.5 H0.5 Z" fill="#2d3035"/></svg>
<div class="a" style="top:630.13px;font-size:23px;line-height:29px;color:#2d2f33;font-weight:bold;left:397.0px;width:1200px;text-align:center;">%</div>
<div class="a" style="left:153px;top:718.5px;width:907px;height:31px;background:#e8e7cc;"></div>
<div class="a" style="left:153px;top:748.5px;width:907px;height:31px;background:#e8e7cc;"></div>
<div class="a" style="left:153px;top:988.5px;width:907px;height:31px;background:#e8e7cc;"></div>
<div class="a" style="left:153px;top:1048.5px;width:907px;height:31px;background:#e8e7cc;"></div>
<div class="a" style="left:153px;top:1168.5px;width:907px;height:31px;background:#e8e7cc;"></div>
<div class="a" style="left:153px;top:1228.5px;width:907px;height:31px;background:#e8e7cc;"></div>
<div class="a" style="left:153px;top:779.0px;width:908px;height:1.3px;background:#d4d4d4;"></div>
<div class="a" style="left:152px;top:659.5px;width:1.2px;height:120.0px;background:#d4d4d4;"></div>
<div class="a" style="left:479px;top:659.5px;width:1.2px;height:120.0px;background:#d4d4d4;"></div>
<div class="a" style="left:624px;top:659.5px;width:1.2px;height:120.0px;background:#d4d4d4;"></div>
<div class="a" style="left:789px;top:659.5px;width:1.2px;height:120.0px;background:#d4d4d4;"></div>
<div class="a" style="left:933px;top:659.5px;width:1.2px;height:120.0px;background:#d4d4d4;"></div>
<div class="a" style="left:1059px;top:659.5px;width:1.2px;height:120.0px;background:#d4d4d4;"></div>
<div class="a" style="left:153px;top:809.0px;width:908px;height:1.3px;background:#d4d4d4;"></div>
<div class="a" style="left:153px;top:1019.0px;width:908px;height:1.3px;background:#d4d4d4;"></div>
<div class="a" style="left:152px;top:809.5px;width:1.2px;height:210.0px;background:#d4d4d4;"></div>
<div class="a" style="left:479px;top:809.5px;width:1.2px;height:210.0px;background:#d4d4d4;"></div>
<div class="a" style="left:624px;top:809.5px;width:1.2px;height:210.0px;background:#d4d4d4;"></div>
<div class="a" style="left:789px;top:809.5px;width:1.2px;height:210.0px;background:#d4d4d4;"></div>
<div class="a" style="left:933px;top:809.5px;width:1.2px;height:210.0px;background:#d4d4d4;"></div>
<div class="a" style="left:1059px;top:809.5px;width:1.2px;height:210.0px;background:#d4d4d4;"></div>
<div class="a" style="left:153px;top:1049.0px;width:908px;height:1.3px;background:#d4d4d4;"></div>
<div class="a" style="left:153px;top:1079.0px;width:908px;height:1.3px;background:#d4d4d4;"></div>
<div class="a" style="left:152px;top:1049.5px;width:1.2px;height:30.0px;background:#d4d4d4;"></div>
<div class="a" style="left:479px;top:1049.5px;width:1.2px;height:30.0px;background:#d4d4d4;"></div>
<div class="a" style="left:624px;top:1049.5px;width:1.2px;height:30.0px;background:#d4d4d4;"></div>
<div class="a" style="left:789px;top:1049.5px;width:1.2px;height:30.0px;background:#d4d4d4;"></div>
<div class="a" style="left:933px;top:1049.5px;width:1.2px;height:30.0px;background:#d4d4d4;"></div>
<div class="a" style="left:1059px;top:1049.5px;width:1.2px;height:30.0px;background:#d4d4d4;"></div>
<div class="a" style="left:153px;top:1109.0px;width:908px;height:1.3px;background:#d4d4d4;"></div>
<div class="a" style="left:153px;top:1199.0px;width:908px;height:1.3px;background:#d4d4d4;"></div>
<div class="a" style="left:152px;top:1109.5px;width:1.2px;height:90.0px;background:#d4d4d4;"></div>
<div class="a" style="left:479px;top:1109.5px;width:1.2px;height:90.0px;background:#d4d4d4;"></div>
<div class="a" style="left:624px;top:1109.5px;width:1.2px;height:90.0px;background:#d4d4d4;"></div>
<div class="a" style="left:789px;top:1109.5px;width:1.2px;height:90.0px;background:#d4d4d4;"></div>
<div class="a" style="left:933px;top:1109.5px;width:1.2px;height:90.0px;background:#d4d4d4;"></div>
<div class="a" style="left:1059px;top:1109.5px;width:1.2px;height:90.0px;background:#d4d4d4;"></div>
<div class="a" style="left:153px;top:1229.0px;width:908px;height:1.3px;background:#d4d4d4;"></div>
<div class="a" style="left:153px;top:1259.0px;width:908px;height:1.3px;background:#d4d4d4;"></div>
<div class="a" style="left:152px;top:1229.5px;width:1.2px;height:30.0px;background:#d4d4d4;"></div>
<div class="a" style="left:479px;top:1229.5px;width:1.2px;height:30.0px;background:#d4d4d4;"></div>
<div class="a" style="left:624px;top:1229.5px;width:1.2px;height:30.0px;background:#d4d4d4;"></div>
<div class="a" style="left:789px;top:1229.5px;width:1.2px;height:30.0px;background:#d4d4d4;"></div>
<div class="a" style="left:933px;top:1229.5px;width:1.2px;height:30.0px;background:#d4d4d4;"></div>
<div class="a" style="left:1059px;top:1229.5px;width:1.2px;height:30.0px;background:#d4d4d4;"></div>
<div class="a" style="top:660.43px;font-size:23px;line-height:29px;color:#6b6b6b;left:160px;">Revenue</div>
<div class="a" style="top:660.43px;font-size:23px;line-height:29px;color:#6b6b6b;letter-spacing:-0.78px;left:-586.62px;width:1200px;text-align:right;">222,622</div>
<div class="a" style="top:660.43px;font-size:23px;line-height:29px;color:#6b6b6b;letter-spacing:-0.78px;left:-421.62px;width:1200px;text-align:right;">227,657</div>
<div class="a" style="top:660.43px;font-size:23px;line-height:29px;color:#6b6b6b;letter-spacing:-0.78px;left:-277.62px;width:1200px;text-align:right;">5,035</div>
<div class="a" style="top:660.43px;font-size:23px;line-height:29px;color:#6b6b6b;letter-spacing:-0.78px;left:-145px;width:1200px;text-align:right;">2%</div>
<div class="a" style="top:690.43px;font-size:23px;line-height:29px;color:#6b6b6b;left:160px;">COGS</div>
<div class="a" style="top:690.43px;font-size:23px;line-height:29px;color:#6b6b6b;letter-spacing:-0.78px;left:-586.62px;width:1200px;text-align:right;">3,429</div>
<div class="a" style="top:690.43px;font-size:23px;line-height:29px;color:#6b6b6b;letter-spacing:-0.78px;left:-421.62px;width:1200px;text-align:right;">35,897</div>
<div class="a" style="top:690.43px;font-size:23px;line-height:29px;color:#6b6b6b;letter-spacing:-0.78px;left:-270.72px;width:1200px;text-align:right;">(32,468)</div>
<div class="a" style="top:690.43px;font-size:23px;line-height:29px;color:#6b6b6b;letter-spacing:-0.78px;left:-145px;width:1200px;text-align:right;">-947%</div>
<div class="a" style="top:720.43px;font-size:23px;line-height:29px;color:#2d2f33;font-weight:bold;left:160px;">Gross Profit</div>
<div class="a" style="top:720.43px;font-size:23px;line-height:29px;color:#2d2f33;font-weight:bold;letter-spacing:-0.78px;left:-586.62px;width:1200px;text-align:right;">219,193</div>
<div class="a" style="top:720.43px;font-size:23px;line-height:29px;color:#2d2f33;font-weight:bold;left:492px;">$</div>
<div class="a" style="top:720.43px;font-size:23px;line-height:29px;color:#2d2f33;font-weight:bold;letter-spacing:-0.78px;left:-421.62px;width:1200px;text-align:right;">191,760</div>
<div class="a" style="top:720.43px;font-size:23px;line-height:29px;color:#2d2f33;font-weight:bold;left:637px;">$</div>
<div class="a" style="top:720.43px;font-size:23px;line-height:29px;color:#2d2f33;font-weight:bold;letter-spacing:-0.78px;left:-270.72px;width:1200px;text-align:right;">(27,433)</div>
<div class="a" style="top:720.43px;font-size:23px;line-height:29px;color:#2d2f33;font-weight:bold;left:802px;">$</div>
<div class="a" style="top:720.43px;font-size:23px;line-height:29px;color:#2d2f33;font-weight:bold;letter-spacing:-0.78px;left:-145px;width:1200px;text-align:right;">-13%</div>
<div class="a" style="top:750.43px;font-size:23px;line-height:29px;color:#2d2f33;font-weight:bold;left:160px;">Gross Margin</div>
<div class="a" style="top:750.43px;font-size:23px;line-height:29px;color:#2d2f33;font-weight:bold;letter-spacing:-0.78px;left:-580px;width:1200px;text-align:right;">98%</div>
<div class="a" style="top:750.43px;font-size:23px;line-height:29px;color:#2d2f33;font-weight:bold;letter-spacing:-0.78px;left:-415px;width:1200px;text-align:right;">84%</div>
<div class="a" style="top:750.43px;font-size:23px;line-height:29px;color:#2d2f33;font-weight:bold;letter-spacing:-0.78px;left:-271px;width:1200px;text-align:right;">-14%</div>
<div class="a" style="top:750.43px;font-size:23px;line-height:29px;color:#2d2f33;font-weight:bold;letter-spacing:-0.78px;left:-145px;width:1200px;text-align:right;">-14%</div>
<div class="a" style="top:810.43px;font-size:23px;line-height:29px;color:#6b6b6b;left:160px;">Advertising &amp; Marketing</div>
<div class="a" style="top:810.43px;font-size:23px;line-height:29px;color:#6b6b6b;letter-spacing:-0.78px;left:-586.62px;width:1200px;text-align:right;">17,856</div>
<div class="a" style="top:810.43px;font-size:23px;line-height:29px;color:#6b6b6b;letter-spacing:-0.78px;left:-421.62px;width:1200px;text-align:right;">2,436</div>
<div class="a" style="top:810.43px;font-size:23px;line-height:29px;color:#6b6b6b;letter-spacing:-0.78px;left:-277.62px;width:1200px;text-align:right;">15,420</div>
<div class="a" style="top:810.43px;font-size:23px;line-height:29px;color:#6b6b6b;letter-spacing:-0.78px;left:-145px;width:1200px;text-align:right;">86%</div>
<div class="a" style="top:840.43px;font-size:23px;line-height:29px;color:#6b6b6b;left:160px;">Other G&amp;A</div>
<div class="a" style="top:840.43px;font-size:23px;line-height:29px;color:#6b6b6b;letter-spacing:-0.78px;left:-586.62px;width:1200px;text-align:right;">9,958</div>
<div class="a" style="top:840.43px;font-size:23px;line-height:29px;color:#6b6b6b;letter-spacing:-0.78px;left:-421.62px;width:1200px;text-align:right;">13,567</div>
<div class="a" style="top:840.43px;font-size:23px;line-height:29px;color:#6b6b6b;letter-spacing:-0.78px;left:-270.72px;width:1200px;text-align:right;">(3,609)</div>
<div class="a" style="top:840.43px;font-size:23px;line-height:29px;color:#6b6b6b;letter-spacing:-0.78px;left:-145px;width:1200px;text-align:right;">-36%</div>
<div class="a" style="top:870.43px;font-size:23px;line-height:29px;color:#6b6b6b;left:160px;">Software &amp; Tech</div>
<div class="a" style="top:870.43px;font-size:23px;line-height:29px;color:#6b6b6b;letter-spacing:-0.78px;left:-586.62px;width:1200px;text-align:right;">13,669</div>
<div class="a" style="top:870.43px;font-size:23px;line-height:29px;color:#6b6b6b;letter-spacing:-0.78px;left:-421.62px;width:1200px;text-align:right;">11,564</div>
<div class="a" style="top:870.43px;font-size:23px;line-height:29px;color:#6b6b6b;letter-spacing:-0.78px;left:-277.62px;width:1200px;text-align:right;">2,105</div>
<div class="a" style="top:870.43px;font-size:23px;line-height:29px;color:#6b6b6b;letter-spacing:-0.78px;left:-145px;width:1200px;text-align:right;">15%</div>
<div class="a" style="top:900.43px;font-size:23px;line-height:29px;color:#6b6b6b;left:160px;">Professional Fees</div>
<div class="a" style="top:900.43px;font-size:23px;line-height:29px;color:#6b6b6b;letter-spacing:-0.78px;left:-586.62px;width:1200px;text-align:right;">6,182</div>
<div class="a" style="top:900.43px;font-size:23px;line-height:29px;color:#6b6b6b;letter-spacing:-0.78px;left:-421.62px;width:1200px;text-align:right;">16,816</div>
<div class="a" style="top:900.43px;font-size:23px;line-height:29px;color:#6b6b6b;letter-spacing:-0.78px;left:-270.72px;width:1200px;text-align:right;">(10,634)</div>
<div class="a" style="top:900.43px;font-size:23px;line-height:29px;color:#6b6b6b;letter-spacing:-0.78px;left:-145px;width:1200px;text-align:right;">-172%</div>
<div class="a" style="top:930.43px;font-size:23px;line-height:29px;color:#6b6b6b;left:160px;">Headcount</div>
<div class="a" style="top:930.43px;font-size:23px;line-height:29px;color:#6b6b6b;letter-spacing:-0.78px;left:-586.62px;width:1200px;text-align:right;">17,790</div>
<div class="a" style="top:930.43px;font-size:23px;line-height:29px;color:#6b6b6b;letter-spacing:-0.78px;left:-421.62px;width:1200px;text-align:right;">12,208</div>
<div class="a" style="top:930.43px;font-size:23px;line-height:29px;color:#6b6b6b;letter-spacing:-0.78px;left:-277.62px;width:1200px;text-align:right;">5,582</div>
<div class="a" style="top:930.43px;font-size:23px;line-height:29px;color:#6b6b6b;letter-spacing:-0.78px;left:-145px;width:1200px;text-align:right;">31%</div>
<div class="a" style="top:960.43px;font-size:23px;line-height:29px;color:#6b6b6b;left:160px;">Travel, Meals &amp; Entertainment</div>
<div class="a" style="top:960.43px;font-size:23px;line-height:29px;color:#6b6b6b;letter-spacing:-0.78px;left:-586.62px;width:1200px;text-align:right;">4,954</div>
<div class="a" style="top:960.43px;font-size:23px;line-height:29px;color:#6b6b6b;letter-spacing:-0.78px;left:-421.62px;width:1200px;text-align:right;">4,317</div>
<div class="a" style="top:960.43px;font-size:23px;line-height:29px;color:#6b6b6b;letter-spacing:-0.78px;left:-277.62px;width:1200px;text-align:right;">636</div>
<div class="a" style="top:960.43px;font-size:23px;line-height:29px;color:#6b6b6b;letter-spacing:-0.78px;left:-145px;width:1200px;text-align:right;">13%</div>
<div class="a" style="top:990.43px;font-size:23px;line-height:29px;color:#2d2f33;font-weight:bold;left:160px;">Total Opex</div>
<div class="a" style="top:990.43px;font-size:23px;line-height:29px;color:#2d2f33;font-weight:bold;letter-spacing:-0.78px;left:-586.62px;width:1200px;text-align:right;">70,408</div>
<div class="a" style="top:990.43px;font-size:23px;line-height:29px;color:#2d2f33;font-weight:bold;left:492px;">$</div>
<div class="a" style="top:990.43px;font-size:23px;line-height:29px;color:#2d2f33;font-weight:bold;letter-spacing:-0.78px;left:-421.62px;width:1200px;text-align:right;">60,908</div>
<div class="a" style="top:990.43px;font-size:23px;line-height:29px;color:#2d2f33;font-weight:bold;left:637px;">$</div>
<div class="a" style="top:990.43px;font-size:23px;line-height:29px;color:#2d2f33;font-weight:bold;letter-spacing:-0.78px;left:-277.62px;width:1200px;text-align:right;">9,501</div>
<div class="a" style="top:990.43px;font-size:23px;line-height:29px;color:#2d2f33;font-weight:bold;left:802px;">$</div>
<div class="a" style="top:990.43px;font-size:23px;line-height:29px;color:#2d2f33;font-weight:bold;letter-spacing:-0.78px;left:-145px;width:1200px;text-align:right;">13%</div>
<div class="a" style="top:1050.43px;font-size:23px;line-height:29px;color:#2d2f33;font-weight:bold;left:160px;">Net Operating Income</div>
<div class="a" style="top:1050.43px;font-size:23px;line-height:29px;color:#2d2f33;font-weight:bold;letter-spacing:-0.78px;left:-586.62px;width:1200px;text-align:right;">148,784</div>
<div class="a" style="top:1050.43px;font-size:23px;line-height:29px;color:#2d2f33;font-weight:bold;left:492px;">$</div>
<div class="a" style="top:1050.43px;font-size:23px;line-height:29px;color:#2d2f33;font-weight:bold;letter-spacing:-0.78px;left:-421.62px;width:1200px;text-align:right;">130,852</div>
<div class="a" style="top:1050.43px;font-size:23px;line-height:29px;color:#2d2f33;font-weight:bold;left:637px;">$</div>
<div class="a" style="top:1050.43px;font-size:23px;line-height:29px;color:#2d2f33;font-weight:bold;letter-spacing:-0.78px;left:-270.72px;width:1200px;text-align:right;">(17,932)</div>
<div class="a" style="top:1050.43px;font-size:23px;line-height:29px;color:#2d2f33;font-weight:bold;left:802px;">$</div>
<div class="a" style="top:1050.43px;font-size:23px;line-height:29px;color:#2d2f33;font-weight:bold;letter-spacing:-0.78px;left:-145px;width:1200px;text-align:right;">-12%</div>
<div class="a" style="top:1110.43px;font-size:23px;line-height:29px;color:#6b6b6b;left:160px;">Other Income</div>
<div class="a" style="top:1110.43px;font-size:23px;line-height:29px;color:#6b6b6b;letter-spacing:-0.78px;left:-611.72px;width:1200px;text-align:right;">-</div>
<div class="a" style="top:1110.43px;font-size:23px;line-height:29px;color:#6b6b6b;letter-spacing:-0.78px;left:-446.72px;width:1200px;text-align:right;">-</div>
<div class="a" style="top:1110.43px;font-size:23px;line-height:29px;color:#6b6b6b;letter-spacing:-0.78px;left:-302.72px;width:1200px;text-align:right;">-</div>
<div class="a" style="top:1110.43px;font-size:23px;line-height:29px;color:#6b6b6b;letter-spacing:-0.78px;left:-145px;width:1200px;text-align:right;">0%</div>
<div class="a" style="top:1140.43px;font-size:23px;line-height:29px;color:#6b6b6b;left:160px;">Other Expense</div>
<div class="a" style="top:1140.43px;font-size:23px;line-height:29px;color:#6b6b6b;letter-spacing:-0.78px;left:-586.62px;width:1200px;text-align:right;">8,392</div>
<div class="a" style="top:1140.43px;font-size:23px;line-height:29px;color:#6b6b6b;letter-spacing:-0.78px;left:-421.62px;width:1200px;text-align:right;">16,934</div>
<div class="a" style="top:1140.43px;font-size:23px;line-height:29px;color:#6b6b6b;letter-spacing:-0.78px;left:-270.72px;width:1200px;text-align:right;">(8,542)</div>
<div class="a" style="top:1140.43px;font-size:23px;line-height:29px;color:#6b6b6b;letter-spacing:-0.78px;left:-145px;width:1200px;text-align:right;">-102%</div>
<div class="a" style="top:1170.43px;font-size:23px;line-height:29px;color:#2d2f33;font-weight:bold;left:160px;">Net Other Income</div>
<div class="a" style="top:1170.43px;font-size:23px;line-height:29px;color:#2d2f33;font-weight:bold;letter-spacing:-0.78px;left:-579.72px;width:1200px;text-align:right;">(8,392)</div>
<div class="a" style="top:1170.43px;font-size:23px;line-height:29px;color:#2d2f33;font-weight:bold;left:492px;">$</div>
<div class="a" style="top:1170.43px;font-size:23px;line-height:29px;color:#2d2f33;font-weight:bold;letter-spacing:-0.78px;left:-414.72px;width:1200px;text-align:right;">(16,934)</div>
<div class="a" style="top:1170.43px;font-size:23px;line-height:29px;color:#2d2f33;font-weight:bold;left:637px;">$</div>
<div class="a" style="top:1170.43px;font-size:23px;line-height:29px;color:#2d2f33;font-weight:bold;letter-spacing:-0.78px;left:-270.72px;width:1200px;text-align:right;">(8,542)</div>
<div class="a" style="top:1170.43px;font-size:23px;line-height:29px;color:#2d2f33;font-weight:bold;left:802px;">$</div>
<div class="a" style="top:1170.43px;font-size:23px;line-height:29px;color:#2d2f33;font-weight:bold;letter-spacing:-0.78px;left:-145px;width:1200px;text-align:right;">-102%</div>
<div class="a" style="top:1230.43px;font-size:23px;line-height:29px;color:#2d2f33;font-weight:bold;left:160px;">Net Income</div>
<div class="a" style="top:1230.43px;font-size:23px;line-height:29px;color:#2d2f33;font-weight:bold;letter-spacing:-0.78px;left:-586.62px;width:1200px;text-align:right;">140,392</div>
<div class="a" style="top:1230.43px;font-size:23px;line-height:29px;color:#2d2f33;font-weight:bold;left:492px;">$</div>
<div class="a" style="top:1230.43px;font-size:23px;line-height:29px;color:#2d2f33;font-weight:bold;letter-spacing:-0.78px;left:-421.62px;width:1200px;text-align:right;">113,918</div>
<div class="a" style="top:1230.43px;font-size:23px;line-height:29px;color:#2d2f33;font-weight:bold;left:637px;">$</div>
<div class="a" style="top:1230.43px;font-size:23px;line-height:29px;color:#2d2f33;font-weight:bold;letter-spacing:-0.78px;left:-270.72px;width:1200px;text-align:right;">(26,475)</div>
<div class="a" style="top:1230.43px;font-size:23px;line-height:29px;color:#2d2f33;font-weight:bold;left:802px;">$</div>
<div class="a" style="top:1230.43px;font-size:23px;line-height:29px;color:#2d2f33;font-weight:bold;letter-spacing:-0.78px;left:-145px;width:1200px;text-align:right;">-19%</div>
<div class="a" style="top:1200.43px;font-size:23px;line-height:29px;color:#000;left:-145px;width:1200px;text-align:right;">0</div>
<svg style="left:790px;top:690.0px" width="11" height="11" viewBox="0 0 11 11"><path d="M0 0 H10 L0 9 Z" fill="#1a7335"/></svg>
<svg style="left:790px;top:1140.0px" width="11" height="11" viewBox="0 0 11 11"><path d="M0 0 H10 L0 9 Z" fill="#1a7335"/></svg>
<svg style="left:0;top:0" width="2058" height="1631"><circle cx="1315.3" cy="836" r="151.8" fill="none" stroke="#d9d9d9" stroke-width="16"/><path d="M1315.3 684.2 A151.8 151.8 0 0 1 1336.22 685.65" fill="none" stroke="#12501f" stroke-width="16"/></svg>
<div class="a" style="top:608.97px;font-size:33px;line-height:41px;color:#595959;left:715.3px;width:1200px;text-align:center;">Revenue</div>
<div class="a" style="top:768.43px;font-size:38px;line-height:48px;color:#404040;left:717.7px;width:1200px;text-align:center;">5,035</div>
<div class="a" style="top:840.45px;font-size:26.7px;line-height:33px;color:#404040;left:717.7px;width:1200px;text-align:center;">2% hit</div>
<svg style="left:0;top:0" width="2058" height="1631"><circle cx="1761.5" cy="836" r="151.8" fill="none" stroke="#d9d9d9" stroke-width="16"/><path d="M1761.5 684.2 A151.8 151.8 0 0 1 1872.16 732.09" fill="none" stroke="#b0b096" stroke-width="16"/></svg>
<div class="a" style="top:608.97px;font-size:33px;line-height:41px;color:#595959;left:1161.5px;width:1200px;text-align:center;">Gross Profit</div>
<div class="a" style="top:776.93px;font-size:38px;line-height:48px;color:#404040;left:1177.7px;width:1200px;text-align:center;">(27,433)</div>
<div class="a" style="top:847.85px;font-size:26.7px;line-height:33px;color:#404040;left:1178px;width:1200px;text-align:center;">13% miss</div>
<svg style="left:0;top:0" width="2058" height="1631"><circle cx="1315.3" cy="1256" r="151.8" fill="none" stroke="#d9d9d9" stroke-width="16"/><path d="M1315.3 1104.2 A151.8 151.8 0 0 1 1430.73 1157.41" fill="none" stroke="#37424d" stroke-width="16"/></svg>
<div class="a" style="top:1027.57px;font-size:33px;line-height:41px;color:#595959;left:715.3px;width:1200px;text-align:center;">Total Opex</div>
<div class="a" style="top:1189.93px;font-size:38px;line-height:48px;color:#404040;left:709.7px;width:1200px;text-align:center;">9,501</div>
<div class="a" style="top:1261.85px;font-size:26.7px;line-height:33px;color:#404040;left:710.7px;width:1200px;text-align:center;">13% hit</div>
<svg style="left:0;top:0" width="2058" height="1631"><circle cx="1761.8" cy="1256" r="151.8" fill="none" stroke="#d9d9d9" stroke-width="16"/><path d="M1761.8 1104.2 A151.8 151.8 0 0 1 1902.44 1198.88" fill="none" stroke="#b0b096" stroke-width="16"/></svg>
<div class="a" style="top:1027.57px;font-size:33px;line-height:41px;color:#595959;left:1161.8px;width:1200px;text-align:center;">Net Income</div>
<div class="a" style="top:1189.93px;font-size:38px;line-height:48px;color:#404040;left:1170px;width:1200px;text-align:center;">(26,475)</div>
<div class="a" style="top:1261.85px;font-size:26.7px;line-height:33px;color:#404040;left:1170.4px;width:1200px;text-align:center;">19% miss</div>
<div class="a" style="top:1502.46px;font-size:20.6px;line-height:26px;color:#1f1f1f;left:-47.5px;width:1200px;text-align:center;">Revenue</div>
<div class="a" style="top:1502.46px;font-size:20.6px;line-height:26px;color:#1f1f1f;left:107.5px;width:1200px;text-align:center;">Gross Profit</div>
<div class="a" style="top:1502.46px;font-size:20.6px;line-height:26px;color:#1f1f1f;left:262.0px;width:1200px;text-align:center;">Total Opex</div>
<div class="a" style="top:1502.46px;font-size:20.6px;line-height:26px;color:#1f1f1f;left:397.0px;width:1200px;text-align:center;">Net Income</div>
<div class="a" style="left:479.8px;top:1529px;width:1.3px;height:5px;background:#d4d4d4;"></div>
<div class="a" style="left:624.8px;top:1529px;width:1.3px;height:5px;background:#d4d4d4;"></div>
<div class="a" style="left:789.8px;top:1529px;width:1.3px;height:5px;background:#d4d4d4;"></div>
<div class="a" style="left:933.8px;top:1529px;width:1.3px;height:5px;background:#d4d4d4;"></div>
<div class="a" style="left:1059.8px;top:1529px;width:1.3px;height:5px;background:#d4d4d4;"></div>
<div class="a" style="left:480px;top:1529px;width:580px;height:1.3px;background:#d4d4d4;"></div>
<div class="a" style="left:0px;top:1533px;width:2058px;height:58px;background:#f9f9f9;"></div>
<div class="a" style="left:0px;top:1533px;width:211px;height:58px;background:#eeeeee;border-top-right-radius:9px"></div>
<div class="a" style="left:453px;top:1533px;width:1605px;height:58px;background:#eeeeee;border-top-left-radius:9px"></div>
<div class="a" style="left:211px;top:1580px;width:242px;height:11px;background:#eeeeee;"></div>
<div class="a" style="left:211px;top:1533px;width:242px;height:53px;background:#f9f9f9;border-radius:0 0 9px 9px"></div>
<div class="a" style="top:1542.89px;font-size:26px;line-height:32px;color:#242424;letter-spacing:0.3px;left:226px;-webkit-text-stroke:0.6px #242424;">Budget vs Actuals</div>
<div class="a" style="left:226.5px;top:1578px;width:211.5px;height:3.2px;background:#107c41;border-radius:2px"></div>
<svg style="left:46px;top:1550px" width="14" height="22" viewBox="0 0 14 22"><path d="M11 2 L3 11 L11 20" fill="none" stroke="#8a8a8a" stroke-width="1.6"/></svg>
<svg style="left:106px;top:1550px" width="14" height="22" viewBox="0 0 14 22"><path d="M3 2 L11 11 L3 20" fill="none" stroke="#8a8a8a" stroke-width="1.6"/></svg>
<div class="a" style="left:461.6px;top:1546px;width:1.5px;height:34.5px;background:#cfcfcf;"></div>
<div class="a" style="left:630.6px;top:1546px;width:1.5px;height:34.5px;background:#cfcfcf;"></div>
<div class="a" style="left:752.5px;top:1546px;width:1.5px;height:34.5px;background:#cfcfcf;"></div>
<div class="a" style="left:884.6px;top:1546px;width:1.5px;height:34.5px;background:#cfcfcf;"></div>
<div class="a" style="top:1549.09px;font-size:26px;line-height:32px;color:#262626;left:486.5px;">Combined</div>
<div class="a" style="top:1549.09px;font-size:26px;line-height:32px;color:#262626;left:656.6px;">Actual</div>
<div class="a" style="top:1549.09px;font-size:26px;line-height:32px;color:#262626;left:776.6px;">Budget</div>
<div class="a" style="left:963px;top:1561.5px;width:21px;height:2.2px;background:#333;"></div>
<div class="a" style="left:972.4px;top:1552px;width:2.2px;height:21px;background:#333;"></div>
<div class="a" style="left:1731.5px;top:1552.7px;width:4px;height:4px;background:#333;"></div>
<div class="a" style="left:1731.5px;top:1561.7px;width:4px;height:4px;background:#333;"></div>
<div class="a" style="left:1731.5px;top:1570.7px;width:4px;height:4px;background:#333;"></div>
<div class="a" style="left:1765px;top:1547px;width:400px;height:32px;background:#f7f7f7;border-radius:16px"></div>
<svg style="left:1771px;top:1553px" width="16" height="20" viewBox="0 0 16 20"><path d="M14 2 V18 L2 10 Z" fill="#555"/></svg>
<div class="a" style="left:1795.5px;top:1553.5px;width:400px;height:18px;background:#737373;border-radius:9px"></div>
<div class="a" style="left:0px;top:1592.5px;width:2058px;height:1.8px;background:#fcfcfc;"></div>
<div class="a" style="left:0px;top:1594.3px;width:2058px;height:40px;background:#f4f4f4;"></div>
<div class="a" style="top:1603.72px;font-size:18.4px;line-height:23px;color:#262626;left:21.4px;">Ready</div>
<svg style="left:110px;top:1598px" width="36" height="30" viewBox="0 0 36 30"><circle cx="15" cy="5" r="3.6" fill="none" stroke="#333" stroke-width="1.6"/><path d="M4 10 Q15 13 26 10 M15 12 V18 L10 27 M15 18 L19 22" fill="none" stroke="#333" stroke-width="1.6"/><path d="M21 19 L30 28 M30 19 L21 28" stroke="#333" stroke-width="1.6"/></svg>
<div class="a" style="top:1602.17px;font-size:20px;line-height:25px;color:#1f1f1f;letter-spacing:0.4px;left:145px;-webkit-text-stroke:0.55px #1f1f1f;">Accessibility: Investigate</div>
<div class="a" style="left:0;top:0;width:2058px;height:1.3px;background:#c6c6c6"></div><div class="a" style="left:0;top:0;width:1.3px;height:1631px;background:#c6c6c6"></div><div class="a" style="left:2056.7px;top:0;width:1.3px;height:1631px;background:#c6c6c6"></div><div class="a" style="left:0;top:1629.7px;width:2058px;height:1.3px;background:#c6c6c6"></div>
<svg style="left:0;top:0" width="2058" height="1631"><g transform=""><path d="M0 0 H22 C 12.5 2.5, 2.5 12.5, 0 22.5 Z" fill="#477150"/><path d="M22 0 C 12.5 2.5, 2.5 12.5, 0 22.5" fill="none" stroke="#cfcfcf" stroke-width="1.4"/></g></svg>
<svg style="left:0;top:0" width="2058" height="1631"><g transform="translate(2058 0) scale(-1 1)"><path d="M0 0 H22 C 12.5 2.5, 2.5 12.5, 0 22.5 Z" fill="#477150"/><path d="M22 0 C 12.5 2.5, 2.5 12.5, 0 22.5" fill="none" stroke="#cfcfcf" stroke-width="1.4"/></g></svg>
<svg style="left:0;top:0" width="2058" height="1631"><g transform="translate(0 1631) scale(1.1 -1.1)"><path d="M0 0 H22 C 12.5 2.5, 2.5 12.5, 0 22.5 Z" fill="#477150"/><path d="M22 0 C 12.5 2.5, 2.5 12.5, 0 22.5" fill="none" stroke="#cfcfcf" stroke-width="1.4"/></g></svg>
<svg style="left:0;top:0" width="2058" height="1631"><g transform="translate(2058 1631) scale(-1.1 -1.1)"><path d="M0 0 H22 C 12.5 2.5, 2.5 12.5, 0 22.5 Z" fill="#477150"/><path d="M22 0 C 12.5 2.5, 2.5 12.5, 0 22.5" fill="none" stroke="#cfcfcf" stroke-width="1.4"/></g></svg>
</div>
</body></html>
